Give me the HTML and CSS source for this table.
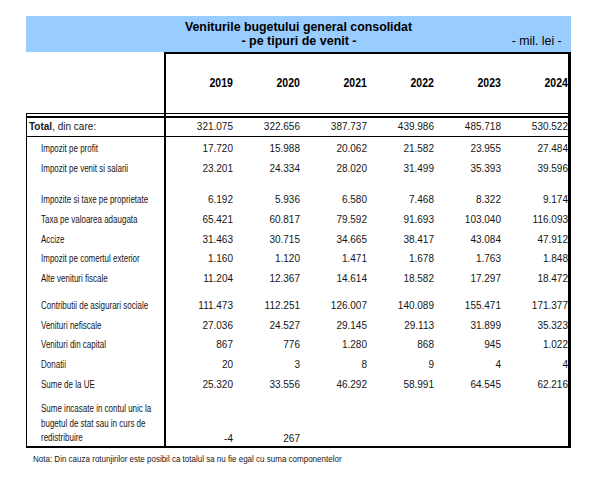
FILE: index.html
```html
<!DOCTYPE html>
<html lang="ro">
<head>
<meta charset="utf-8">
<title>Veniturile bugetului general consolidat</title>
<link rel="stylesheet" href="styles.css">
</head>
<body>
<div class="sheet">
  <div class="banner">
    <div class="t1">Veniturile bugetului general consolidat</div>
    <div class="t2"><span></span><span class="sub">- pe tipuri de venit -</span><span class="unit"><span class="uc">- mil. lei -</span></span></div>
  </div>

  <div class="row head">
    <div class="lab"></div>
    <div class="yr"><span class="cy">2019</span></div><div class="yr"><span class="cy">2020</span></div><div class="yr"><span class="cy">2021</span></div><div class="yr"><span class="cy">2022</span></div><div class="yr"><span class="cy">2023</span></div><div class="yr"><span class="cy">2024</span></div>
  </div>
  <div class="row gap"><div class="lab"></div></div>

  <div class="row total">
    <div class="lab"><span><b>Total</b>, din care:</span></div>
    <div class="num">321.075</div><div class="num">322.656</div><div class="num">387.737</div><div class="num">439.986</div><div class="num">485.718</div><div class="num">530.522</div>
  </div>
  <div class="row h19">
    <div class="lab ind"><span class="c">Impozit pe profit</span></div>
    <div class="num">17.720</div><div class="num">15.988</div><div class="num">20.062</div><div class="num">21.582</div><div class="num">23.955</div><div class="num">27.484</div>
  </div>
  <div class="row h20">
    <div class="lab ind"><span class="c">Impozit pe venit si salarii</span></div>
    <div class="num">23.201</div><div class="num">24.334</div><div class="num">28.020</div><div class="num">31.499</div><div class="num">35.393</div><div class="num">39.596</div>
  </div>
  <div class="row h31">
    <div class="lab ind"><span class="c">Impozite si taxe pe proprietate</span></div>
    <div class="num">6.192</div><div class="num">5.936</div><div class="num">6.580</div><div class="num">7.468</div><div class="num">8.322</div><div class="num">9.174</div>
  </div>
  <div class="row h20">
    <div class="lab ind"><span class="c">Taxa pe valoarea adaugata</span></div>
    <div class="num">65.421</div><div class="num">60.817</div><div class="num">79.592</div><div class="num">91.693</div><div class="num">103.040</div><div class="num">116.093</div>
  </div>
  <div class="row h20">
    <div class="lab ind"><span class="c">Accize</span></div>
    <div class="num">31.463</div><div class="num">30.715</div><div class="num">34.665</div><div class="num">38.417</div><div class="num">43.084</div><div class="num">47.912</div>
  </div>
  <div class="row h19">
    <div class="lab ind"><span class="c">Impozit pe comertul exterior</span></div>
    <div class="num">1.160</div><div class="num">1.120</div><div class="num">1.471</div><div class="num">1.678</div><div class="num">1.763</div><div class="num">1.848</div>
  </div>
  <div class="row h20">
    <div class="lab ind"><span class="c">Alte venituri fiscale</span></div>
    <div class="num">11.204</div><div class="num">12.367</div><div class="num">14.614</div><div class="num">18.582</div><div class="num">17.297</div><div class="num">18.472</div>
  </div>
  <div class="row h27">
    <div class="lab ind"><span class="c">Contributii de asigurari sociale</span></div>
    <div class="num">111.473</div><div class="num">112.251</div><div class="num">126.007</div><div class="num">140.089</div><div class="num">155.471</div><div class="num">171.377</div>
  </div>
  <div class="row h20">
    <div class="lab ind"><span class="c">Venituri nefiscale</span></div>
    <div class="num">27.036</div><div class="num">24.527</div><div class="num">29.145</div><div class="num">29.113</div><div class="num">31.899</div><div class="num">35.323</div>
  </div>
  <div class="row h19">
    <div class="lab ind"><span class="c">Venituri din capital</span></div>
    <div class="num">867</div><div class="num">776</div><div class="num">1.280</div><div class="num">868</div><div class="num">945</div><div class="num">1.022</div>
  </div>
  <div class="row h20">
    <div class="lab ind"><span class="c">Donatii</span></div>
    <div class="num">20</div><div class="num">3</div><div class="num">8</div><div class="num">9</div><div class="num">4</div><div class="num">4</div>
  </div>
  <div class="row h20">
    <div class="lab ind"><span class="c">Sume de la UE</span></div>
    <div class="num">25.320</div><div class="num">33.556</div><div class="num">46.292</div><div class="num">58.991</div><div class="num">64.545</div><div class="num">62.216</div>
  </div>
  <div class="row last">
    <div class="lab ind multi"><span class="c">Sume incasate in contul unic la<br>bugetul de stat sau in curs de<br>redistribuire</span></div>
    <div class="num">-4</div><div class="num">267</div><div class="num"></div><div class="num"></div><div class="num"></div><div class="num"></div>
  </div>
</div>
<p class="note"><span class="nc">Nota: Din cauza rotunjirilor este posibil ca totalul sa nu fie egal cu suma componentelor</span></p>
</body>
</html>
```

FILE: styles.css
```css
html, body {
  margin: 0;
  padding: 0;
  background: #fff;
}

body {
  font-family: "Liberation Sans", Arial, sans-serif;
  color: #161616;
}

.sheet {
  margin: 16px 0 0 26px;
  width: 545px;
}

.banner {
  box-sizing: border-box;
  height: 36px;
  padding-top: 3.5px;
  background: #99ccff;
  font-size: 13px;
  line-height: 14px;
  font-weight: bold;
  color: #000;
}

.t1 {
  text-align: center;
  transform: scaleX(0.95);
  transform-origin: 50% 50%;
}

.t2 {
  display: grid;
  grid-template-columns: 1fr auto 1fr;
}

.sub {
  display: inline-block;
  transform: scaleX(0.96);
  transform-origin: 50% 50%;
}

.unit {
  justify-self: end;
  padding-right: 9px;
  font-weight: normal;
}

.uc {
  display: inline-block;
  transform: scaleX(0.95);
  transform-origin: 100% 50%;
}

.row {
  display: grid;
  grid-template-columns: 139px repeat(6, 67px);
  box-sizing: border-box;
  width: 545px;
  border-left: 1px solid #000;
  border-right: 3px solid #000;
  font-size: 10px;
  line-height: 14px;
  overflow: hidden;
}

.lab {
  box-sizing: border-box;
  border-right: 2px solid #000;
  padding-left: 2px;
  display: flex;
  align-items: flex-end;
  white-space: nowrap;
}

.ind {
  padding-left: 13.5px;
}

.c {
  display: inline-block;
  white-space: nowrap;
  transform: scaleX(0.8);
  transform-origin: 0 50%;
}

.multi {
  line-height: 14.6px;
}

.num {
  align-self: end;
  text-align: right;
}

.head {
  border-left: none;
  grid-template-columns: 140px repeat(6, 67px);
  height: 62px;
  border-bottom: 1px solid #000;
}

.head .yr {
  border-top: 2px solid #000;
  display: flex;
  align-items: center;
  justify-content: flex-end;
  font-size: 12.5px;
  font-weight: bold;
  color: #000;
  padding-bottom: 1px;
}

.cy {
  display: inline-block;
  transform: scaleX(0.84);
  transform-origin: 100% 50%;
}

.gap {
  height: 2px;
}

.total {
  height: 21px;
  border-top: 2px solid #000;
  border-bottom: 1px solid #000;
}

.total .num {
  align-self: center;
}

.total .lab {
  align-items: center;
}

.h19 { height: 19px; }
.h20 { height: 20px; }
.h27 { height: 27px; }
.h31 { height: 31px; }

.last {
  height: 56px;
  border-bottom: 2px solid #000;
}

.note {
  margin: 5.5px 0 0 33px;
  font-size: 9px;
  line-height: 11px;
  color: #161616;
  white-space: nowrap;
}

.nc {
  display: inline-block;
  transform: scaleX(0.89);
  transform-origin: 0 50%;
}
```
